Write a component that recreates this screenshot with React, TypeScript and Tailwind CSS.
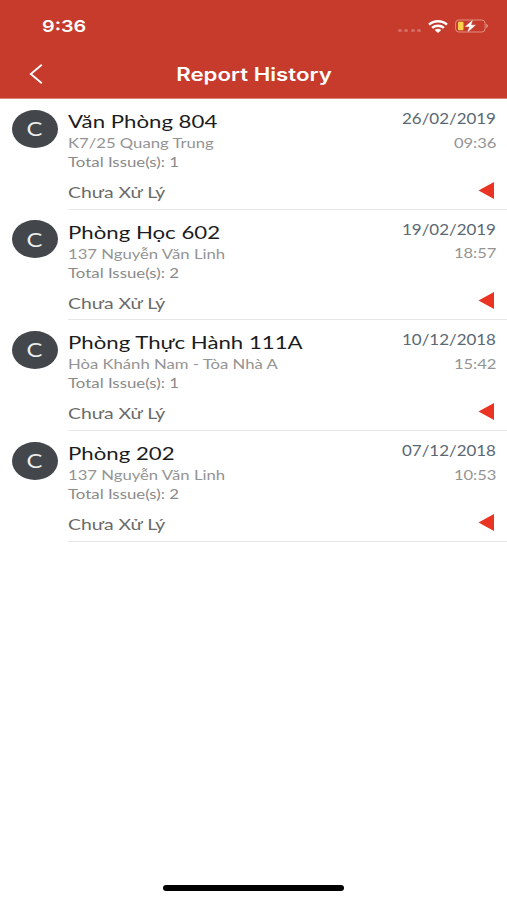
import clsx from "clsx"

type Report = {
    room: string
    address: string
    issues: number
    date: string
    time: string
}

const reports: Report[] = [
    { room: "Văn Phòng 804", address: "K7/25 Quang Trung", issues: 1, date: "26/02/2019", time: "09:36" },
    { room: "Phòng Học 602", address: "137 Nguyễn Văn Linh", issues: 2, date: "19/02/2019", time: "18:57" },
    { room: "Phòng Thực Hành 111A", address: "Hòa Khánh Nam - Tòa Nhà A", issues: 1, date: "10/12/2018", time: "15:42" },
    { room: "Phòng 202", address: "137 Nguyễn Văn Linh", issues: 2, date: "07/12/2018", time: "10:53" },
]

const StatusBar = () => {
    return (
        <div className="flex h-[50px] items-start justify-between pl-[42px] pr-[18px] pt-[15px]">
            <span className="origin-left scale-x-[1.2] font-['Inter',sans-serif] text-[16.5px] font-semibold leading-[22px]">9:36</span>
            <div className="flex h-[22px] items-center">
                {/* no signal */}
                <div className="mr-[7px] mt-[8px] flex gap-[2.5px]">
                    {[0, 1, 2, 3].map((dot) => (
                        <div key={dot} className="h-[3px] w-[4px] rounded-full bg-white/25"></div>
                    ))}
                </div>
                <svg width="20" height="13" viewBox="0 0 20 13" fill="none" stroke="white" strokeWidth="2.4">
                    <path d="M1 4.6C6 .1 14 .1 19 4.6" />
                    <path d="M4.1 7.9C7.3 5 12.7 5 15.9 7.9" />
                    <path d="M6.7 10Q10 7.6 13.3 10L10 12.9Z" fill="white" stroke="none" />
                </svg>
                <svg className="ml-[7px]" width="34" height="14" viewBox="0 0 34 14">
                    <rect x=".6" y="1" width="29.5" height="12" rx="3.2" fill="none" stroke="#e08f80" />
                    <path d="M31.2 4.8Q35 7 31.2 9.2Z" fill="#e08f80" />
                    <rect x="3" y="2.8" width="5.5" height="8.4" rx="1" fill="#fbd24b" />
                    <path d="M18.3 0L9.4 8H14L11.9 14.2L21.3 5.8H16.5Z" fill="white" stroke="#c63b2c" strokeWidth=".5" />
                </svg>
            </div>
        </div>
    )
}

const Header = () => {
    return (
        <header className="h-[98px] shrink-0 bg-[#c63b2c] text-white">
            <StatusBar />
            <div className="grid h-[48px] grid-cols-[60px_1fr_60px] items-center">
                <svg className="ml-[29px]" width="14" height="20" viewBox="0 0 14 20" fill="none" stroke="white" strokeWidth="1.8">
                    <path d="M12.8 .8L1.8 10L12.8 19.2" />
                </svg>
                <h1 className="ml-px scale-x-[1.235] text-center font-['Inter',sans-serif] text-[18px] font-semibold">Report History</h1>
            </div>
        </header>
    )
}

const ReportRow = ({ report }: { report: Report }) => {
    return (
        <li className="flex h-[110.7px] pl-[12px]">
            <div className="mt-[10.5px] flex h-[38px] w-[46px] shrink-0 items-center justify-center rounded-[50%] bg-[#43474c]">
                <span className="mr-[2px] scale-x-[1.25] text-[19px] leading-none text-[#eee]">C</span>
            </div>
            <div className="ml-[10px] flex flex-1 justify-between border-b border-[#e6e6e8] pr-[11px]">
                <div className="flex flex-col items-start whitespace-nowrap">
                    <h2 className="mt-[10px] origin-left scale-x-[1.234] text-[18px] leading-[24px] text-[#1c1c1e]">{report.room}</h2>
                    <p className="mt-px origin-left scale-x-[1.235] text-[13.5px] leading-[19px] text-[#949494]">{report.address}</p>
                    <p className="origin-left scale-x-[1.245] text-[13.5px] leading-[18px] text-[#8a8a8a]">Total Issue(s): {report.issues}</p>
                    <p className="mt-[10px] origin-left scale-x-[1.21] text-[16px] leading-[22px] text-[#6a6a6a]">Chưa Xử Lý</p>
                </div>
                <div className="flex flex-col items-end">
                    <span className="mt-[9px] origin-right scale-x-[1.16] text-[14.6px] leading-[22px] text-[#5a6874]">{report.date}</span>
                    <span className="mt-[2.5px] origin-right scale-x-[1.2] text-[13.8px] leading-[20px] text-[#949494]">{report.time}</span>
                    <svg className="mr-[2px] mt-[29px]" width="16" height="17" viewBox="0 0 16 17">
                        <path d="M.5 8.5L16 0V17Z" fill="#e93323" />
                    </svg>
                </div>
            </div>
        </li>
    )
}

const App = () => {
    return (
        <main className={clsx("flex h-[900px] w-[507px] flex-col overflow-hidden bg-white", "font-['Lato','Noto_Sans',sans-serif]")}>
            <Header />
            <ul className="flex-1 border-t border-[#d98378]">
                {reports.map((report) => (
                    <ReportRow key={report.date} report={report} />
                ))}
            </ul>
            {/* home indicator */}
            <div className="mb-[9px] h-[6px] w-[181px] self-center rounded-full bg-black"></div>
        </main>
    )
}

export default App
